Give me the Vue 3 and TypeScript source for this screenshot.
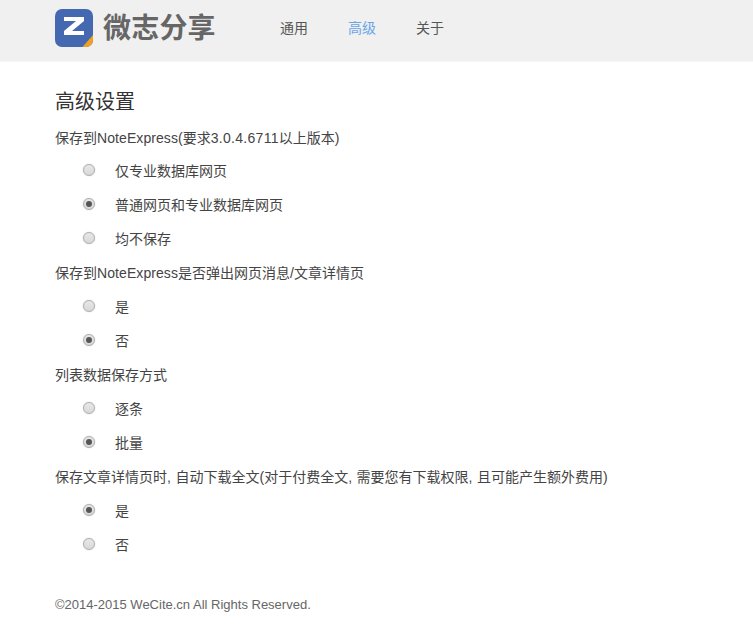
<script setup lang="ts">
interface Option { label: string; checked: boolean }
interface Segment { text: string; cls?: string }
interface Group { title: Segment[]; options: Option[] }
const nav = [
  { label: '通用', active: false },
  { label: '高级', active: true },
  { label: '关于', active: false },
]
const groups: Group[] = [
  { title: [
    { text: '保存到' }, { text: 'NoteExpress', cls: 'word' }, { text: '(要求' },
    { text: '3.0.4.6711', cls: 'digits' }, { text: '以上版本)' },
  ], options: [
    { label: '仅专业数据库网页', checked: false },
    { label: '普通网页和专业数据库网页', checked: true },
    { label: '均不保存', checked: false },
  ] },
  { title: [
    { text: '保存到' }, { text: 'NoteExpress', cls: 'word' }, { text: '是否弹出网页消息/文章详情页' },
  ], options: [
    { label: '是', checked: false },
    { label: '否', checked: true },
  ] },
  { title: [{ text: '列表数据保存方式' }], options: [
    { label: '逐条', checked: false },
    { label: '批量', checked: true },
  ] },
  { title: [{ text: '保存文章详情页时, 自动下载全文(对于付费全文, 需要您有下载权限, 且可能产生额外费用)' }], options: [
    { label: '是', checked: true },
    { label: '否', checked: false },
  ] },
]
</script>

<template>
  <div class="page">
    <header class="top">
      <div class="brand">
        <svg class="logo" width="38" height="38" viewBox="0 0 38 38">
          <defs><clipPath id="lc"><rect width="38" height="38" rx="7" /></clipPath></defs>
          <g clip-path="url(#lc)">
            <rect width="38" height="38" fill="#4469b0" />
            <path d="M38 26 L38 38 L27.5 38 Z" fill="#f2a01f" />
          </g>
          <path d="M9 8 H29 V12 L17 22 H29 V26 H9 V22 L21 12 H9 Z" fill="#fff" />
        </svg>
        <span class="name">微志分享</span>
      </div>
      <nav class="nav">
        <span v-for="n in nav" :key="n.label" class="nav-item" :class="{ active: n.active }">{{ n.label }}</span>
      </nav>
    </header>
    <main class="main">
      <h1 class="heading">高级设置</h1>
      <section v-for="(g, i) in groups" :key="i" class="group">
        <p class="title"><span v-for="(s, j) in g.title" :key="j" :class="s.cls">{{ s.text }}</span></p>
        <div v-for="o in g.options" :key="o.label" class="opt">
          <span class="radio" :class="{ on: o.checked }"></span>
          <span class="opt-label">{{ o.label }}</span>
        </div>
      </section>
      <footer class="foot">©2014-2015 WeCite.cn All Rights Reserved.</footer>
    </main>
  </div>
</template>

<style>
html, body { margin: 0; background: #fff; }
</style>

<style scoped>
.page {
  font-family: "Liberation Sans", "Noto Sans CJK SC", sans-serif;
  font-size: 14px;
  color: #444;
  height: 643px;
  overflow: hidden;
}
.top {
  display: flex;
  height: 62px;
  background: #f0f0f0;
  border-bottom: 1px solid #f6f6f6;
  padding-left: 55px;
  box-sizing: border-box;
}
.brand { display: flex; align-items: flex-start; padding-top: 9px; width: 225px; }
.logo { flex: none; }
.name {
  margin-left: 10px;
  font-size: 28px;
  line-height: 40px;
  font-weight: 700;
  color: #666;
  letter-spacing: 0.2px;
}
.nav { display: flex; gap: 40px; padding-top: 18px; }
.nav-item { line-height: 20px; color: #555; }
.nav-item.active { color: #6aa5e8; }
.main { padding: 0 55px; }
.heading {
  margin: 26px 0 5px;
  font-size: 20px;
  line-height: 28px;
  font-weight: 400;
  color: #333;
}
.title {
  margin: 0;
  height: 34px;
  line-height: 20px;
  padding-top: 6px;
  box-sizing: border-box;
  word-spacing: 0.7px;
}
.group:first-of-type .title { padding-top: 7px; }
.word { letter-spacing: 0.08px; }
.digits { letter-spacing: 0.3px; }
.opt {
  display: flex;
  align-items: center;
  height: 34px;
  padding-left: 28px;
}
.radio {
  box-sizing: border-box;
  width: 12px;
  height: 12px;
  border-radius: 50%;
  border: 1px solid #b0b0b0;
  background: linear-gradient(#e8e8e8, #d8d8d8);
  box-shadow: 0 0 1px #aaa;
  position: relative;
  margin-bottom: 5px;
}
.radio.on::after {
  content: "";
  position: absolute;
  inset: 2px;
  border-radius: 50%;
  background: #555;
}
.opt-label { margin-left: 20px; margin-bottom: 4px; }
.foot { margin-top: 32px; font-size: 13px; line-height: 20px; color: #666; }
</style>
